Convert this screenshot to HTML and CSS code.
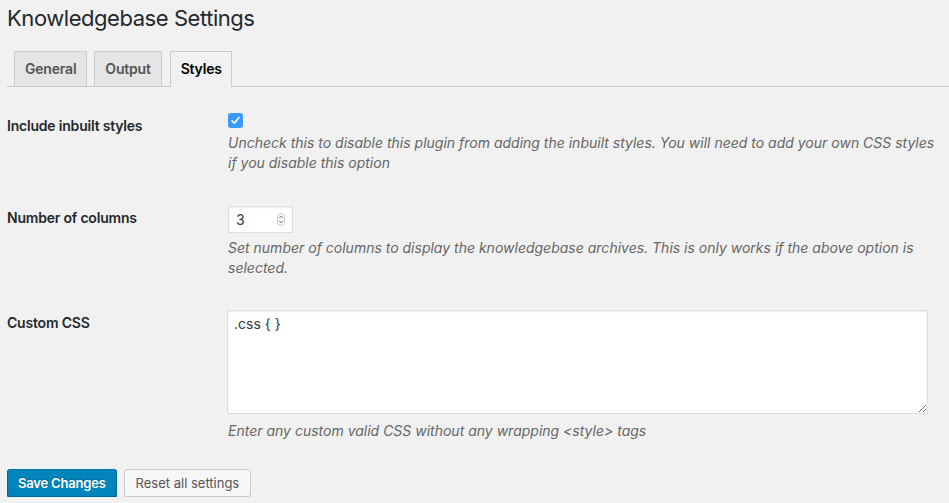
FILE: index.html
```html
<!DOCTYPE html>
<html lang="en">
<head>
<meta charset="utf-8">
<title>Knowledgebase Settings</title>
<link rel="stylesheet" href="styles.css">
</head>
<body>
<div class="wrap">
  <h1 class="title">Knowledgebase Settings</h1>
  <nav class="tabs">
    <a class="tab">General</a>
    <a class="tab">Output</a>
    <a class="tab active">Styles</a>
  </nav>
  <form class="form">
    <div class="row">
      <div class="label">Include inbuilt styles</div>
      <div class="field">
        <span class="checkbox"><svg width="15" height="15" viewBox="0 0 15 15"><rect x="0" y="0" width="15" height="15" rx="3" fill="#3b99fc"/><path d="M4 7.8 L6.3 10.2 L11 4.6" fill="none" stroke="#fff" stroke-width="1.6" stroke-linecap="round" stroke-linejoin="round"/></svg></span>
        <p class="desc">Uncheck this to disable this plugin from adding the inbuilt styles. You will need to add your own CSS styles if you disable this option</p>
      </div>
    </div>
    <div class="row">
      <div class="label">Number of columns</div>
      <div class="field">
        <div class="number"><span class="num-val">3</span><span class="spin"><svg width="8" height="13" viewBox="0 0 8 13"><path d="M2.3 5 L4 3.2 L5.7 5" fill="none" stroke="#555" stroke-width="0.9"/><path d="M2.3 8 L4 9.8 L5.7 8" fill="none" stroke="#555" stroke-width="0.9"/></svg></span></div>
        <p class="desc">Set number of columns to display the knowledgebase archives. This is only works if the above option is selected.</p>
      </div>
    </div>
    <div class="row">
      <div class="label">Custom CSS</div>
      <div class="field">
        <textarea class="css-area">.css { }</textarea>
        <p class="desc">Enter any custom valid CSS without any wrapping &lt;style&gt; tags</p>
      </div>
    </div>
    <div class="actions">
      <button type="button" class="btn primary">Save Changes</button>
      <button type="button" class="btn secondary">Reset all settings</button>
    </div>
  </form>
</div>
</body>
</html>
```
FILE: styles.css
```css
html, body {
  margin: 0;
  padding: 0;
  background: #f1f1f1;
}
body {
  font-family: Inter, "Noto Sans", "Liberation Sans", sans-serif;
  font-size: 14px;
  color: #23282d;
}
.wrap {
  padding-left: 7px;
}
.title {
  margin: 0;
  padding-top: 4px;
  font-size: 22px;
  font-weight: 400;
  letter-spacing: -0.45px;
  line-height: 29px;
  color: #23282d;
}
.tabs {
  display: flex;
  margin-top: 18px;
  border-bottom: 1px solid #ccc;
  height: 35px;
}
.tab {
  margin-left: 7px;
  height: 34px;
  padding: 0 10px;
  line-height: 34px;
  font-size: 14px;
  font-weight: 600;
  letter-spacing: -0.2px;
  color: #555;
  background: #e5e5e5;
  border: 1px solid #ccc;
  border-bottom: none;
}
.tab.active {
  background: #f1f1f1;
  color: #000;
  height: 35px;
  margin-left: 8px;
  padding: 0 9px 0 10px;
}
.form {
  margin-top: 11px;
}
.row {
  display: flex;
  padding: 16px 0 17px;
}
.label {
  width: 221px;
  flex: none;
  margin-top: 2px;
  line-height: 20px;
  font-weight: 600;
  letter-spacing: -0.2px;
}
.field {
  flex: 1;
  padding-right: 10px;
}
.checkbox {
  display: block;
  width: 15px;
  height: 15px;
  margin-top: -1px;
  margin-bottom: 5px;
}
.checkbox svg {
  display: block;
}
.desc {
  margin: 0;
  font-style: italic;
  color: #666;
  line-height: 20px;
}
.number {
  display: flex;
  align-items: center;
  justify-content: space-between;
  box-sizing: border-box;
  width: 65px;
  height: 27px;
  padding: 0 7px 0 7px;
  background: #fff;
  border: 1px solid #ddd;
  box-shadow: inset 0 1px 2px rgba(0,0,0,0.07);
  margin-bottom: 5px;
}
.num-val {
  font-size: 14px;
  color: #32373c;
}
.spin {
  display: block;
  width: 8px;
  height: 13px;
  border: 1px solid #c8c8c8;
  border-radius: 4px;
  box-sizing: border-box;
  overflow: hidden;
}
.spin svg {
  display: block;
  margin: -1px 0 0 -1px;
}
.css-area {
  display: block;
  box-sizing: border-box;
  width: calc(100% - 10px);
  margin: -1px 0 7px -1px;
  height: 104px;
  padding: 3px 6px;
  background: #fff;
  border: 1px solid #ddd;
  box-shadow: inset 0 1px 2px rgba(0,0,0,0.07);
  font-family: Inter, "Noto Sans", "Liberation Sans", sans-serif;
  font-size: 14px;
  line-height: 20px;
  color: #32373c;
  resize: both;
}
.actions {
  display: flex;
  gap: 7px;
  margin-top: 11px;
}
.btn {
  box-sizing: border-box;
  height: 28px;
  padding: 0 10px 1px;
  font-family: Inter, "Noto Sans", "Liberation Sans", sans-serif;
  font-size: 13px;
  line-height: 26px;
  border-radius: 3px;
  border: 1px solid;
  white-space: nowrap;
}
.primary {
  background: #0085ba;
  border-color: #0073aa #006799 #006799;
  box-shadow: 0 1px 0 #006799;
  color: #fff;
  font-weight: 600;
  letter-spacing: -0.2px;
  text-shadow: 0 -1px 1px #006799;
}
.secondary {
  background: #f7f7f7;
  border-color: #ccc;
  box-shadow: 0 1px 0 #ccc;
  color: #555;
  padding: 0 11px 1px;
}
```
